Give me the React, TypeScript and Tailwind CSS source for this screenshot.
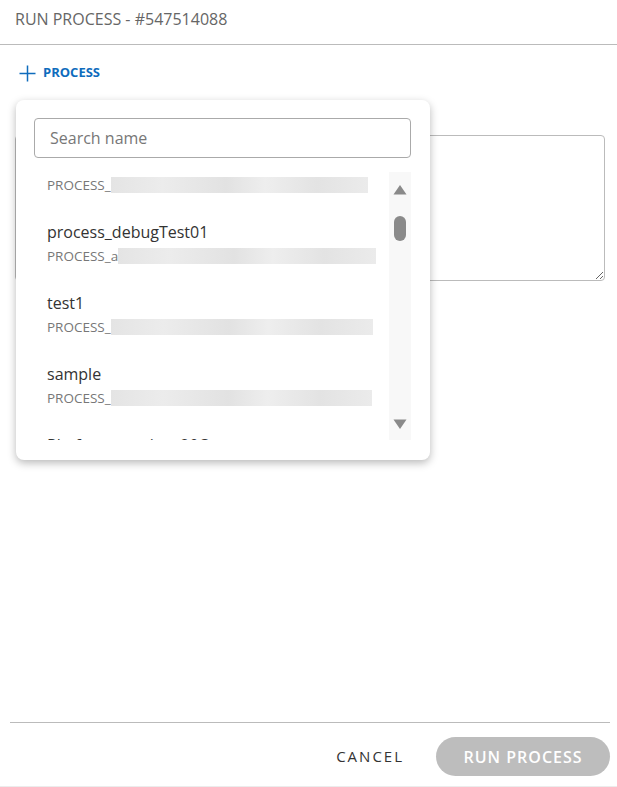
import React from "react";

const items = [
  { name: "process_hidden", code: "PROCESS_", bar: "w-[257px]" },
  { name: "process_debugTest01", code: "PROCESS_a", bar: "w-[258px]" },
  { name: "test1", code: "PROCESS_", bar: "w-[262px]" },
  { name: "sample", code: "PROCESS_", bar: "w-[261px]" },
  { name: "Platform_version_20Oct", code: "PROCESS_", bar: "w-[260px]" },
];

function BlurBar({ className }: { className: string }) {
  return (
    <span
      className={`inline-block h-[16px] ${className} bg-[linear-gradient(90deg,#e4e4e4_0%,#ececec_20%,#e2e2e2_45%,#eeeeee_60%,#e3e3e3_80%,#ebebeb_100%)]`}
    />
  );
}

function ProcessDropdown() {
  return (
    <div className="absolute left-[16px] top-[55px] w-[414px] h-[360px] bg-white rounded-[8px] shadow-[0_3px_8px_rgba(0,0,0,0.28)] px-[18px] pt-[18px]">
      <input
        placeholder="Search name"
        className="w-[377px] h-[40px] rounded-[4px] border border-[#aaaaaa] pl-[15px] text-[16px] text-[#333] placeholder:text-[#777] outline-none"
      />
      <div className="mt-[14px] flex h-[268px] w-[377px]">
        <div className="flex-1 overflow-hidden">
          <div className="-mt-[32px]">
            {items.map((item) => (
              <div key={item.name} className="h-[71px] pl-[13px] pt-[10px]">
                <div className="text-[16px] leading-[22px] text-[#333]">{item.name}</div>
                <div className="mt-[4px] flex items-center text-[13.5px] leading-[18px] text-[#777]">
                  <span>{item.code}</span>
                  <BlurBar className={item.bar} />
                </div>
              </div>
            ))}
          </div>
        </div>
        <div className="flex w-[22px] flex-col items-center bg-[#f8f8f8]">
          <svg width="14" height="11" viewBox="0 0 14 11" className="mt-[12px]">
            <path d="M7 1 L13.5 10.5 L0.5 10.5 Z" fill="#8a8a8a" />
          </svg>
          <div className="mt-[21px] h-[25px] w-[12px] rounded-full bg-[#8a8a8a]" />
          <div className="flex-1" />
          <svg width="14" height="11" viewBox="0 0 14 11" className="mb-[10px]">
            <path d="M0.5 0.5 L13.5 0.5 L7 10 Z" fill="#8a8a8a" />
          </svg>
        </div>
      </div>
    </div>
  );
}

export default function App() {
  return (
    <div className="flex h-[787px] flex-col border-b border-[#ececec] bg-white font-['Open_Sans',sans-serif]">
      <div className="h-[45px] border-b border-[#bbbbbb] px-[15px] pt-[7px]">
        <span className="text-[16px] leading-[22px] text-[#666]">RUN PROCESS - #547514088</span>
      </div>

      <div className="relative flex-1 px-[15px]">
        <div className="mt-[18px] flex h-[20px] items-center gap-[7px] pl-[4px]">
          <svg width="17" height="17" viewBox="0 0 17 17">
            <path d="M8.5 0.5 V16.5 M0.5 8.5 H16.5" stroke="#0f6cbd" strokeWidth="1.5" />
          </svg>
          <span className="text-[13px] font-bold text-[#0f6cbd]">PROCESS</span>
        </div>
        <textarea className="mt-[52px] block h-[146px] w-[590px] resize rounded-[4px] border border-[#bbbbbb] outline-none" />
        <ProcessDropdown />
      </div>

      <div className="ml-[10px] h-[64px] w-[600px] border-t border-[#bbbbbb]">
        <div className="flex items-center justify-end gap-[32px] pt-[14px]">
          <span className="text-[15px] tracking-[2px] text-[#333]">CANCEL</span>
          <button className="h-[39px] w-[174px] rounded-full bg-[#bdbdbd] text-[16px] font-semibold tracking-[1px] text-white">
            RUN PROCESS
          </button>
        </div>
      </div>
    </div>
  );
}
